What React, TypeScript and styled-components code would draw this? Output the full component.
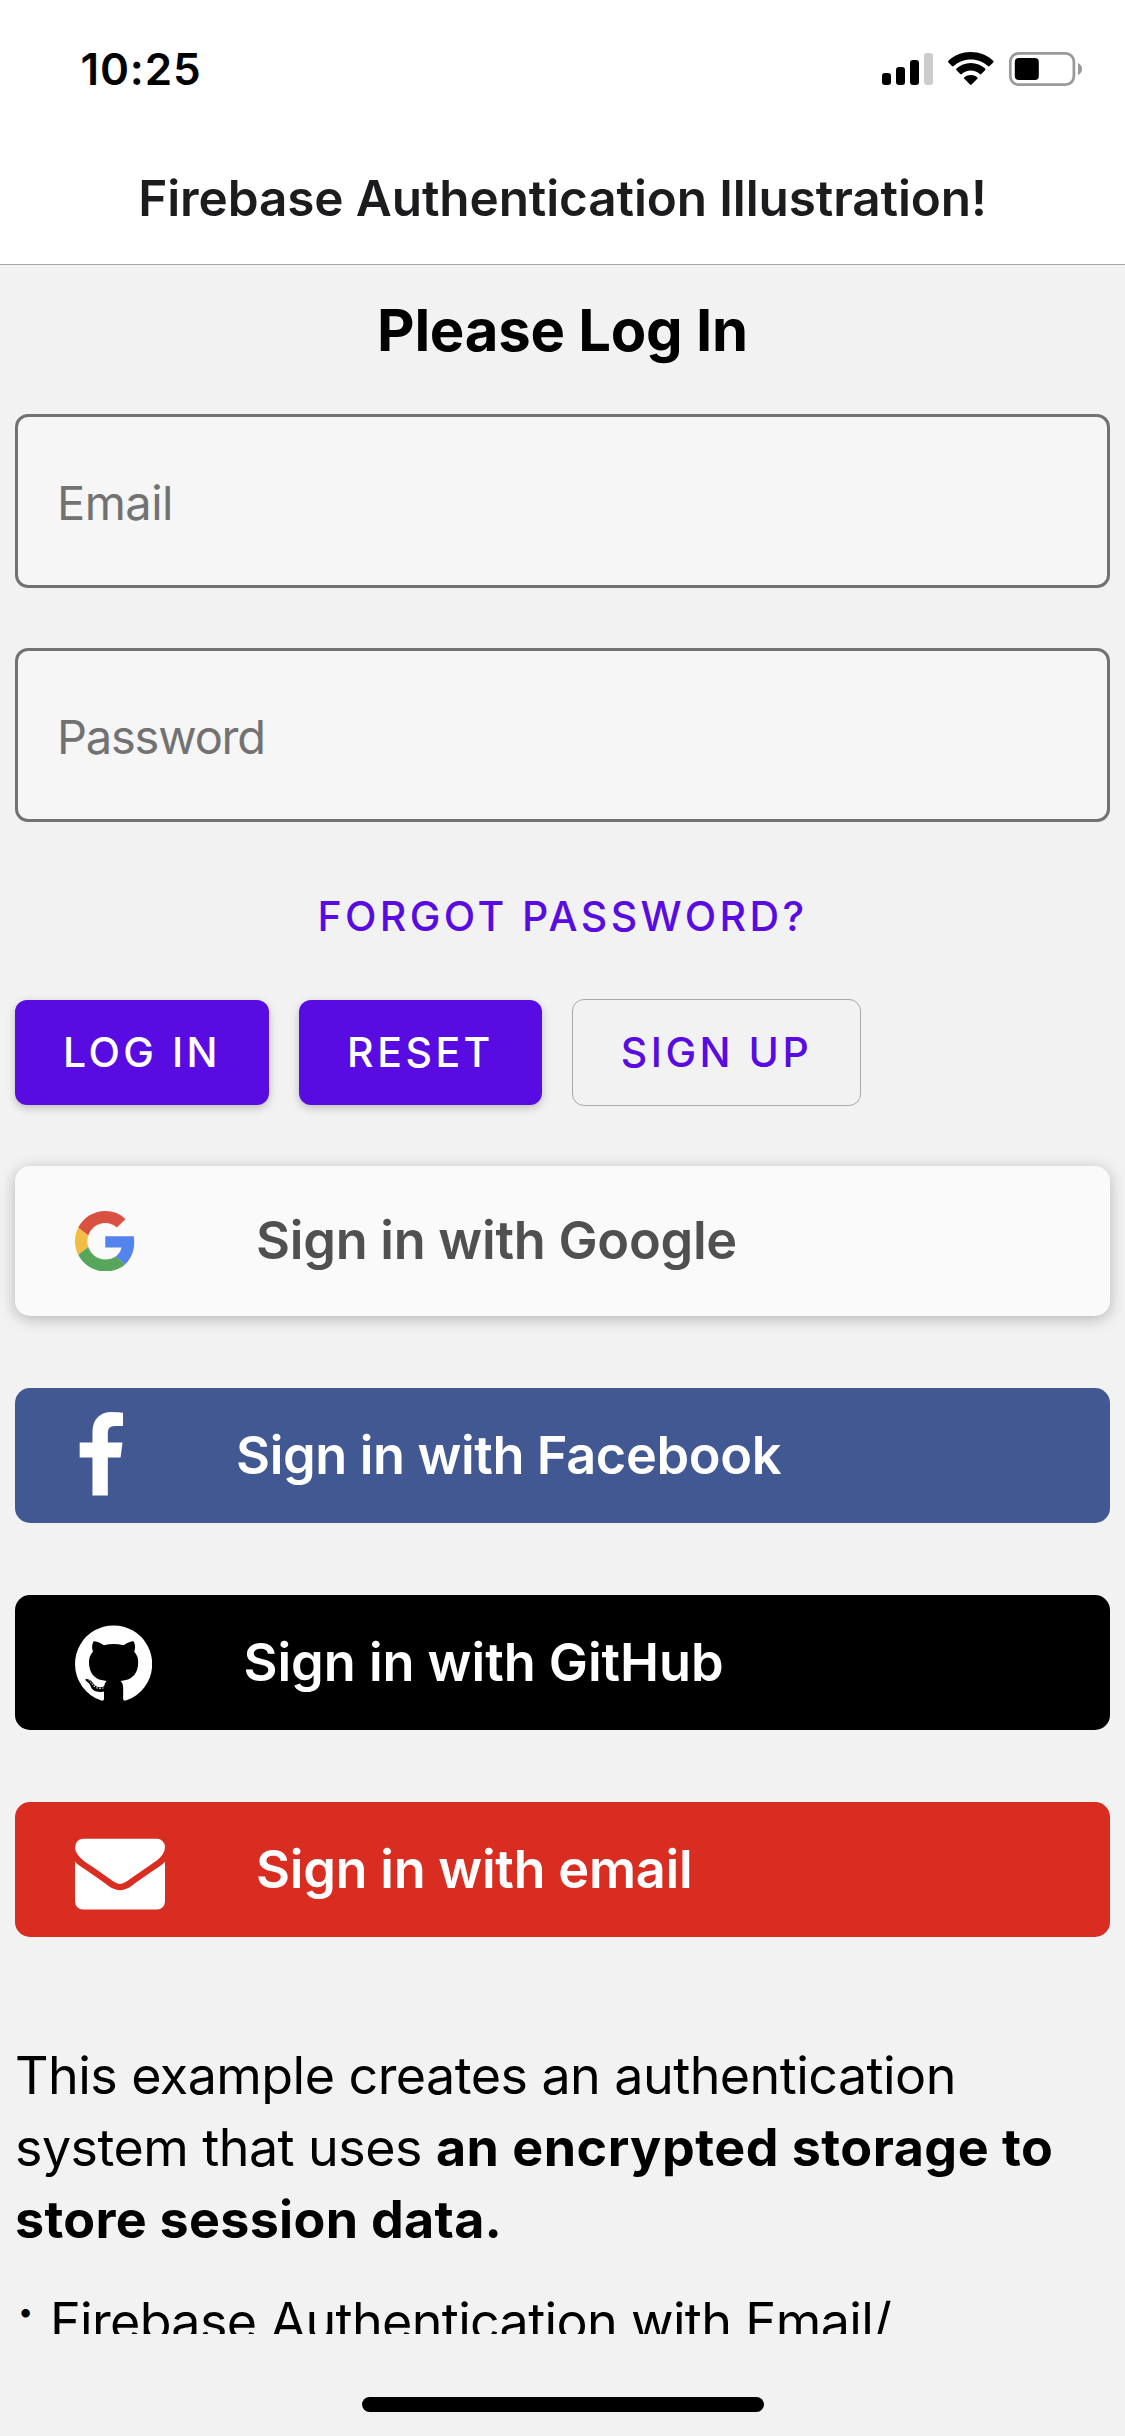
import React from 'react';
import styled, { createGlobalStyle } from 'styled-components';

const GlobalStyle = createGlobalStyle`
  *, *::before, *::after { box-sizing: border-box; }
  body {
    margin: 0;
    background: #f2f2f2;
    font-family: Inter, "Liberation Sans", sans-serif;
    color: #000;
  }
  button { font-family: inherit; cursor: pointer; }
`;

const Screen = styled.div`
  width: 1125px;
  height: 2436px;
  display: flex;
  flex-direction: column;
  background: #f2f2f2;
  overflow: hidden;
`;

const Header = styled.header`
  flex: none;
  height: 265px;
  background: #fff;
  border-bottom: 1px solid #a7a7aa;
`;

const StatusBar = styled.div`
  display: flex;
  justify-content: space-between;
  align-items: center;
  height: 132px;
  padding: 6px 42px 0 80.5px;
`;

const Clock = styled.span`
  font-size: 44px;
  font-weight: 600;
  letter-spacing: 0.86px;
`;

const StatusIcons = styled.svg`
  display: block;
  width: 202px;
  height: 36px;
`;

const NavTitle = styled.h1`
  margin: 0;
  height: 132px;
  line-height: 132px;
  text-align: center;
  font-size: 49.5px;
  font-weight: 600;
  letter-spacing: -0.12px;
  color: #1c1c1e;
`;

const Scroll = styled.main`
  flex: none;
  height: 2069px;
  padding: 0 15px;
  overflow: hidden;
`;

const Heading = styled.h2`
  margin: 0 0 18px;
  height: 131px;
  line-height: 131px;
  text-align: center;
  font-size: 58px;
  font-weight: 700;
  letter-spacing: -0.24px;
`;

const Fields = styled.div`
  display: flex;
  flex-direction: column;
  gap: 60px;
`;

const Field = styled.div`
  display: flex;
  align-items: center;
  height: 174px;
  padding: 2px 39px 0;
  border: 3px solid #727272;
  border-radius: 13px;
  background: #f6f6f6;
`;

const FieldLabel = styled.label<{ $tracking: number }>`
  font-size: 47px;
  letter-spacing: ${(p) => p.$tracking}px;
  color: #727272;
`;

const TextButton = styled.button`
  display: block;
  width: 100%;
  height: 105px;
  margin: 42px 0 30px;
  padding: 0 0 2px;
  border: 0;
  background: none;
  font-size: 41px;
  font-weight: 500;
  letter-spacing: 3.4px;
  color: #580ce2;
`;

const Actions = styled.div`
  display: flex;
  align-items: center;
  gap: 30px;
  height: 107px;
`;

const ActionButton = styled.button<{ $width: number; $outlined?: boolean }>`
  width: ${(p) => p.$width}px;
  height: ${(p) => (p.$outlined ? 107 : 105)}px;
  padding: 0 0 2px;
  border: ${(p) => (p.$outlined ? '1px solid #a8a8a8' : '0')};
  border-radius: 12px;
  background: ${(p) => (p.$outlined ? 'transparent' : '#580ce2')};
  box-shadow: ${(p) => (p.$outlined ? 'none' : '0 3px 9px rgba(0, 0, 0, 0.22)')};
  color: ${(p) => (p.$outlined ? '#580ce2' : '#fff')};
  font-size: 41px;
  font-weight: 500;
  letter-spacing: 3.5px;
`;

const Providers = styled.div`
  display: flex;
  flex-direction: column;
  gap: 72px;
  margin-top: 60px;
`;

const ProviderButton = styled.button<{ $bg: string; $fg?: string; $raised?: boolean }>`
  display: flex;
  align-items: center;
  width: 100%;
  height: ${(p) => (p.$raised ? 150 : 135)}px;
  padding: 0 60px;
  border: 0;
  border-radius: 15px;
  background: ${(p) => p.$bg};
  box-shadow: ${(p) => (p.$raised ? '0 3px 15px rgba(0, 0, 0, 0.25)' : 'none')};
  color: ${(p) => p.$fg ?? '#fff'};
  text-align: left;
`;

const IconSlot = styled.span<{ $width: number }>`
  flex: none;
  display: flex;
  align-items: center;
  width: ${(p) => p.$width}px;
`;

const ProviderLabel = styled.span<{ $tracking: number }>`
  padding-bottom: 2px;
  font-size: 52.3px;
  font-weight: 600;
  letter-spacing: ${(p) => p.$tracking}px;
  white-space: nowrap;
`;

const Glyph = styled.svg<{ $width: number }>`
  display: block;
  width: ${(p) => p.$width}px;
  height: 90px;
  margin-top: 2px;
  fill: #fff;
`;

const GoogleMark = styled.svg`
  display: block;
  width: 60.5px;
  height: 60.5px;
`;

const Description = styled.p`
  margin: 103px 0 30px;
  font-size: 52px;
  line-height: 72px;
  letter-spacing: -0.55px;
  white-space: nowrap;
`;

const Strong = styled.strong<{ $tracking: number }>`
  font-weight: 700;
  letter-spacing: ${(p) => p.$tracking}px;
`;

const FeatureList = styled.ul`
  margin: 0;
  padding: 0;
  list-style: none;
`;

const Feature = styled.li`
  display: flex;
  font-size: 52px;
  line-height: 72px;
  letter-spacing: -0.66px;
  white-space: nowrap;
`;

const Bullet = styled.span`
  flex: none;
  width: 35px;
  padding-left: 3px;
  font-size: 27px;
  line-height: 52px;
`;

const HomeArea = styled.footer`
  flex: 1;
  display: flex;
  justify-content: center;
  padding-top: 63px;
`;

const HomeIndicator = styled.div`
  width: 402px;
  height: 15px;
  border-radius: 8px;
  background: #000;
`;

function DeviceStatus() {
  return (
    <StatusIcons viewBox="881 51 202 36">
      <rect x="882" y="73" width="9" height="12" rx="3" />
      <rect x="896" y="67" width="9" height="18" rx="3" />
      <rect x="910" y="60" width="9" height="25" rx="3" />
      <rect x="924" y="53" width="9" height="32" rx="3" fill="#ccc" />
      <path d="M970.8 52c8.6 0 16.500 3.300 22.400 8.800.5.500.5 1.100 0 1.600l-3.600 3.700c-.5.500-1.100.5-1.600 0-4.600-4.300-10.600-6.700-17.200-6.700s-12.600 2.400-17.200 6.700c-.5.500-1.100.5-1.600 0l-3.600-3.700c-.5-.5-.5-1.100 0-1.600 5.900-5.500 13.800-8.800 22.400-8.800z" />
      <path d="M970.800 63c5.500 0 10.500 2.100 14.300 5.600.5.500.5 1.100 0 1.600l-3.800 3.800c-.5.500-1 .5-1.500 0-2.400-2.200-5.500-3.500-9-3.500s-6.600 1.300-9 3.500c-.5.500-1 .5-1.500 0l-3.800-3.800c-.5-.5-.5-1.100 0-1.600 3.800-3.500 8.800-5.600 14.300-5.600z" />
      <path d="M970.800 75c2.400 0 4.600.8 6.400 2.200.5.400.5 1.100.1 1.500l-5.700 5.900c-.5.500-1.100.5-1.600 0l-5.700-5.900c-.4-.4-.4-1.100.1-1.500 1.800-1.400 4-2.200 6.400-2.200z" />
      <rect x="1010.300" y="53.300" width="63.600" height="31.400" rx="8.500" fill="none" stroke="#999" strokeWidth="2.700" />
      <rect x="1014.800" y="58" width="24" height="22" rx="4" />
      <path d="M1078 63c2.500 1 4 3.400 4 6s-1.500 5-4 6z" fill="#999" />
    </StatusIcons>
  );
}

function GoogleIcon() {
  return (
    <GoogleMark viewBox="0 0 48 48">
      <path fill="#d95140" d="M24 9.500c3.540 0 6.710 1.220 9.210 3.600l6.850-6.850C35.900 2.380 30.470 0 24 0 14.620 0 6.510 5.380 2.560 13.220l7.980 6.190C12.430 13.720 17.740 9.500 24 9.500z" />
      <path fill="#5383ec" d="M46.980 24.550c0-1.570-.15-3.090-.38-4.550H24v9.020h12.940c-.58 2.960-2.260 5.480-4.780 7.180l7.730 6c4.510-4.180 7.090-10.360 7.090-17.650z" />
      <path fill="#f1bd42" d="M10.530 28.590c-.48-1.450-.76-2.990-.76-4.590s.27-3.140.76-4.590l-7.980-6.190C.92 16.460 0 20.120 0 24c0 3.880.92 7.540 2.560 10.780l7.970-6.190z" />
      <path fill="#58a65c" d="M24 48c6.480 0 11.930-2.130 15.890-5.810l-7.730-6c-2.150 1.450-4.920 2.300-8.160 2.300-6.260 0-11.570-4.220-13.470-9.910l-7.980 6.190C6.510 42.620 14.620 48 24 48z" />
    </GoogleMark>
  );
}

function FacebookIcon() {
  return (
    <Glyph $width={51.4} viewBox="386 0 1024 1792">
      <path d="M1343 12v264h-157q-86 0-116 36t-30 108v189h293l-39 296h-254v759h-306v-759h-255v-296h255v-218q0-186 104-288.500t277-102.500q147 0 228 12z" />
    </Glyph>
  );
}

function GitHubIcon() {
  return (
    <Glyph $width={77.2} viewBox="128 0 1536 1792">
      <path d="M896 128q209 0 385.500 103t279.500 279.500 103 385.500q0 251-146.500 451.500t-378.500 277.500q-27 5-40-7t-13-30q0-3 .5-76.500t.5-134.500q0-97-52-142 57-6 102.500-18t94-39 81-66.500 53-105 20.500-150.500q0-119-79-206 37-91-8-204-28-9-81 11t-92 44l-38 24q-93-26-192-26t-192 26q-16-11-42.500-27t-83.500-38.500-85-13.500q-45 113-8 204-79 87-79 206 0 85 20.500 150t52.500 105 80.500 67 94 39 102.500 18q-39 36-49 103-21 10-45 15t-57 5-65.500-21.500-55.500-62.500q-19-32-48.500-52t-49.500-24l-20-3q-21 0-29 4.500t-5 11.500 9 14 13 12l7 5q22 10 43.500 38t31.500 51l10 23q13 38 44 61.500t67 30 69.500 7 55.500-3.500l23-4q0 38 .5 88.500t.5 54.500q0 18-13 30t-40 7q-232-77-378.500-277.500t-146.500-451.500q0-209 103-385.500t279.500-279.500 385.500-103zm-477 1103q3-7-7-12-10-3-13 2-3 7 7 12 9 6 13-2zm31 34q7-5-2-16-10-9-16-3-7 5 2 16 10 10 16 3zm30 45q9-7 0-19-8-13-17-6-9 5 0 18t17 7zm42 42q8-8-4-19-12-12-20-3-9 8 4 19 12 12 20 3zm57 25q3-11-13-16-15-4-19 7t13 15q15 6 19-6zm63 5q0-13-17-11-16 0-16 11 0 13 17 11 16 0 16-11zm58-10q-2-11-18-9-16 3-14 15t18 8 14-14z" />
    </Glyph>
  );
}

function EnvelopeIcon() {
  return (
    <Glyph $width={90} viewBox="0 0 1792 1792">
      <path d="M1792 710v794q0 66-47 113t-113 47h-1472q-66 0-113-47t-47-113v-794q44 49 101 87 362 246 497 345 57 42 92.500 65.500t94.500 48 110 24.500h2q51 0 110-24.500t94.500-48 92.500-65.500q170-123 498-345 57-39 100-87zm0-294q0 79-49 151t-122 123q-376 261-468 325-10 7-42.500 31t-54 38.500-52 32.500-57.500 27-50 9h-2q-23 0-50-9t-57.500-27-52-32.500-54-38.500-42.500-31q-91-64-262-182.500t-205-142.500q-62-42-117-115.500t-55-136.500q0-78 41.500-130t118.500-52h1472q65 0 112.500 47t47.500 113z" />
    </Glyph>
  );
}

export default function App() {
  return (
    <>
      <GlobalStyle />
      <Screen>
        <Header>
          <StatusBar>
            <Clock>10:25</Clock>
            <DeviceStatus />
          </StatusBar>
          <NavTitle>Firebase Authentication Illustration!</NavTitle>
        </Header>

        <Scroll>
          <Heading>Please Log In</Heading>

          <Fields>
            <Field>
              <FieldLabel $tracking={-0.55}>Email</FieldLabel>
            </Field>
            <Field>
              <FieldLabel $tracking={-1.2}>Password</FieldLabel>
            </Field>
          </Fields>

          <TextButton>FORGOT PASSWORD?</TextButton>

          <Actions>
            <ActionButton $width={254}>LOG IN</ActionButton>
            <ActionButton $width={243}>RESET</ActionButton>
            <ActionButton $width={289} $outlined>SIGN UP</ActionButton>
          </Actions>

          <Providers>
            <ProviderButton $bg="#fafafa" $fg="#505050" $raised>
              <IconSlot $width={181}><GoogleIcon /></IconSlot>
              <ProviderLabel $tracking={-0.26}>Sign in with Google</ProviderLabel>
            </ProviderButton>
            <ProviderButton $bg="#425893">
              <IconSlot $width={161}><FacebookIcon /></IconSlot>
              <ProviderLabel $tracking={-0.38}>Sign in with Facebook</ProviderLabel>
            </ProviderButton>
            <ProviderButton $bg="#000">
              <IconSlot $width={168.5}><GitHubIcon /></IconSlot>
              <ProviderLabel $tracking={-0.04}>Sign in with GitHub</ProviderLabel>
            </ProviderButton>
            <ProviderButton $bg="#da2d21">
              <IconSlot $width={181}><EnvelopeIcon /></IconSlot>
              <ProviderLabel $tracking={-0.27}>Sign in with email</ProviderLabel>
            </ProviderButton>
          </Providers>

          <Description>
            This example creates an authentication
            <br />
            system that uses <Strong $tracking={0.48}>an encrypted storage to</Strong>
            <br />
            <Strong $tracking={0.3}>store session data.</Strong>
          </Description>

          <FeatureList>
            <Feature>
              <Bullet>•</Bullet>
              Firebase Authentication with Email/
            </Feature>
          </FeatureList>
        </Scroll>

        <HomeArea>
          <HomeIndicator />
        </HomeArea>
      </Screen>
    </>
  );
}
